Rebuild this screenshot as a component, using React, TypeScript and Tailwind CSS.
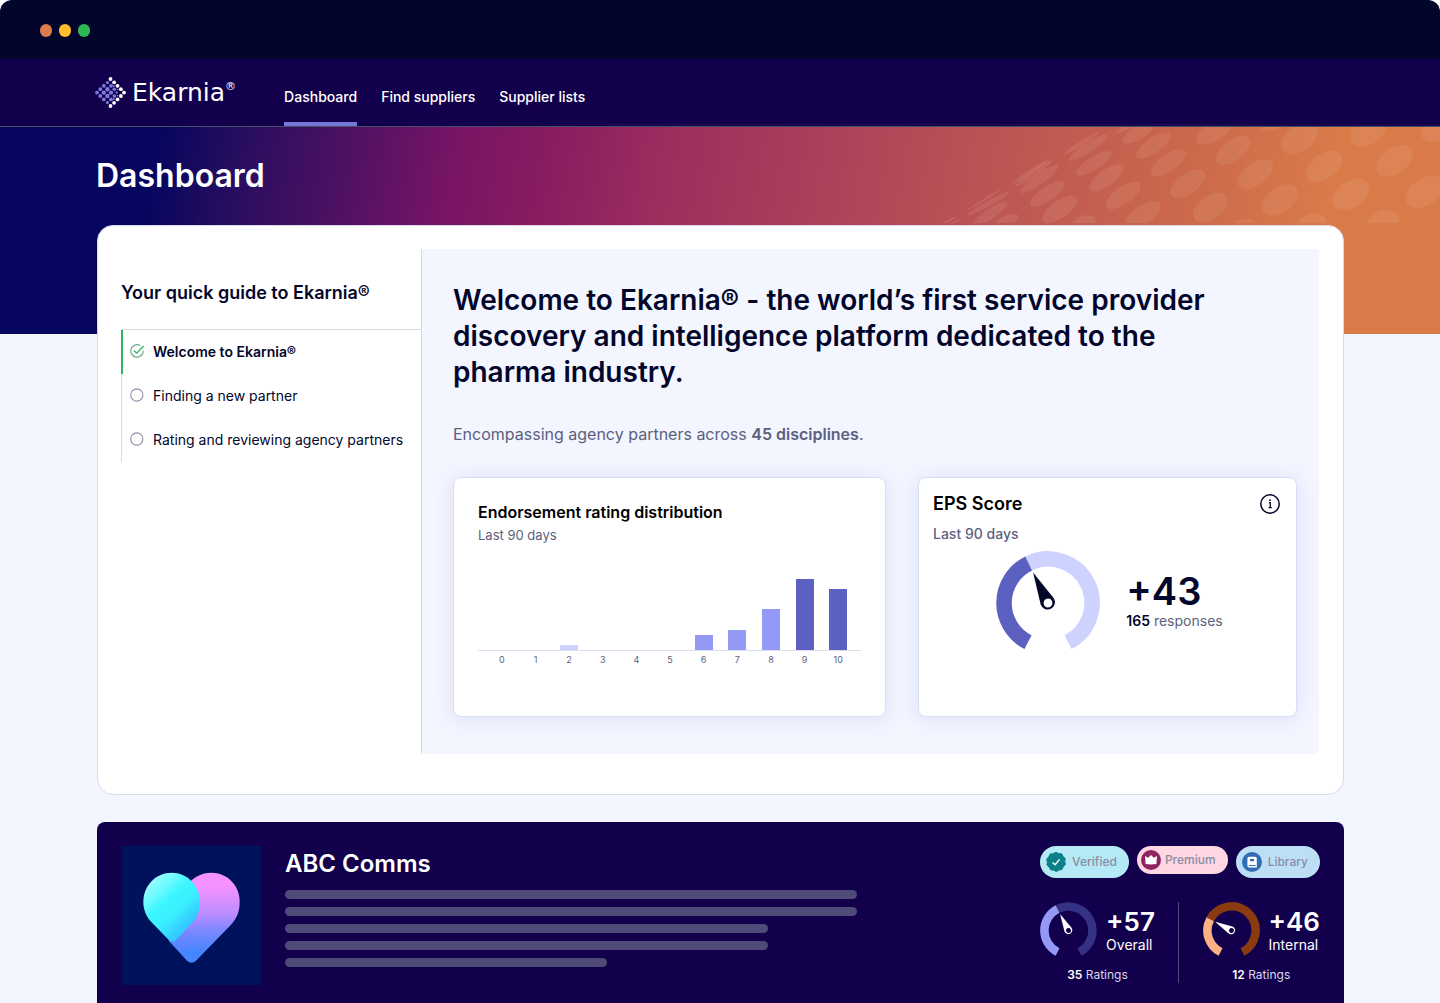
import React from "react";

type BarDatum = { label: string; height: number; tone: string };

const bars: BarDatum[] = [
  { label: "0", height: 0, tone: "bg-transparent" },
  { label: "1", height: 0, tone: "bg-transparent" },
  { label: "2", height: 5, tone: "bg-[#cdd2ff]" },
  { label: "3", height: 0, tone: "bg-transparent" },
  { label: "4", height: 0, tone: "bg-transparent" },
  { label: "5", height: 0, tone: "bg-transparent" },
  { label: "6", height: 15, tone: "bg-[#9599f6]" },
  { label: "7", height: 20, tone: "bg-[#9599f6]" },
  { label: "8", height: 41, tone: "bg-[#9599f6]" },
  { label: "9", height: 71, tone: "bg-[#5c60c1]" },
  { label: "10", height: 61, tone: "bg-[#5c60c1]" },
];

// cx, cy, rx, ry, rotation
const heroDots: number[][] = [
  [912, 64, 58, 28, -33], [967, 121, 58, 30, -38], [692, 68, 52, 20, -32], [735, 107, 60, 22, -36],
  [780, 158, 60, 26, -36], [836, 221, 60, 30, -37], [901, 292, 58, 34, -38], [1032, 192, 60, 33, -37],
  [1103, 270, 60, 37, -38], [1160, 85, 60, 38, -38], [1231, 169, 60, 37, -38], [1309, 254, 60, 39, -36],
  [1360, 64, 57, 39, -36], [1436, 152, 60, 38, -36], [1524, 245, 62, 40, -36], [1556, 56, 48, 36, -35],
  [1402, 340, 50, 38, -25], [1192, 348, 48, 34, -28], [1085, 40, 42, 20, -20], [995, 350, 36, 22, -20],
  [705, 315, 60, 28, -36], [648, 256, 60, 26, -37], [600, 203, 60, 24, -37], [562, 160, 60, 19, -34],
  [546, 113, 68, 14, -34], [526, 100, 62, 7, -33], [655, 54, 34, 6, -25], [532, 340, 38, 22, -22],
  [464, 298, 60, 26, -36], [427, 252, 60, 21, -35], [405, 207, 68, 15, -37], [388, 190, 64, 10, -36],
  [378, 184, 62, 5, -34], [262, 312, 60, 16, -35], [258, 280, 70, 8, -30], [243, 270, 60, 4, -33],
  [310, 332, 36, 16, -25], [142, 332, 24, 4, -30], [162, 335, 18, 3, -25],
];

function polar(deg: number, r: number): string {
  const a = (deg * Math.PI) / 180;
  return `${(52 + r * Math.sin(a)).toFixed(2)} ${(52 - r * Math.cos(a)).toFixed(2)}`;
}

function arc(from: number, to: number): string {
  return `M${polar(from, 44)} A44 44 0 ${to - from > 180 ? 1 : 0} 1 ${polar(to, 44)}`;
}

function Gauge(props: { angle: number; on: string; off: string; needle: string; hub: string; className: string }) {
  const { angle, on, off, needle, hub, className } = props;
  return (
    <svg viewBox="0 0 104 104" className={className} fill="none" aria-hidden="true">
      <path d={arc(angle, 153)} stroke={off} strokeWidth="15.5" />
      <path d={arc(-153, angle)} stroke={on} strokeWidth="15.5" />
      <g transform={`rotate(${angle} 52 52)`}>
        <path d="M52 18 L59.2 50 A7.3 7.3 0 1 1 44.8 50 Z" fill={needle} />
        <circle cx="52" cy="52" r="4.4" fill={hub} />
      </g>
    </svg>
  );
}

function LogoMark() {
  const rim = [
    [15.5, 2], [19.1, 5.4], [22.5, 8.8], [25.9, 12.2], [29, 15.6], [25.9, 19], [22.5, 22.4], [19.1, 25.8], [15.5, 29],
  ];
  const inner = [
    [2, 15.6, 1.9], [5.3, 12.2, 1.9], [5.3, 19, 1.9], [8.8, 8.8, 1.9], [8.8, 15.6, 2.2], [8.8, 22.4, 1.9],
    [12.4, 5.6, 1.5], [12.4, 12.2, 2.2], [12.4, 19, 2.2], [12.4, 25.6, 1.5],
    [16, 8.8, 1.9], [16, 15.6, 2.2], [16, 22.4, 1.9], [19.3, 12.2, 1.8], [19.3, 19, 1.8],
    [18.8, 9.2, 0.9], [18.8, 22, 0.9], [21.6, 15.6, 1.2], [22.6, 12.6, 0.8], [22.6, 18.6, 0.8],
  ];
  return (
    <svg viewBox="0 0 31 31" className="size-[31px]" aria-hidden="true">
      {inner.map(([x, y, r]) => (
        <circle key={`${x}-${y}`} cx={x} cy={y} r={r} fill="#7b7bdc" />
      ))}
      {rim.map(([x, y]) => (
        <circle key={`${x}-${y}`} cx={x} cy={y} r="1.9" fill="#fff" />
      ))}
    </svg>
  );
}

function HeartLogo() {
  return (
    <svg viewBox="96 198 417 417" className="size-[139px] shrink-0 bg-[#00125b]" role="img" aria-label="ABC Comms logo">
      <defs>
        <linearGradient id="pink" x1="0" y1="0" x2="0" y2="1">
          <stop offset="0.15" stopColor="#f592ff" />
          <stop offset="0.45" stopColor="#bd8dff" />
          <stop offset="0.65" stopColor="#7b88ff" />
          <stop offset="0.88" stopColor="#4784ff" />
        </linearGradient>
        <linearGradient id="cyan" gradientUnits="userSpaceOnUse" x1="170" y1="300" x2="290" y2="430">
          <stop offset="0" stopColor="#a5fbff" />
          <stop offset="0.25" stopColor="#74fbff" />
          <stop offset="0.5" stopColor="#3af6ff" />
          <stop offset="0.72" stopColor="#3af0ff" />
          <stop offset="1" stopColor="#33ccff" />
        </linearGradient>
      </defs>
      <path d="M290 318 C308 292 334 278 364 278 C412 278 449 316 449 365 C449 395 440 415 423 434 L318 542 Q304 554 291 542 L236 482 Z" fill="url(#pink)" />
      <path d="M245 278 C292 278 329 316 329 365 C329 395 321 412 308 427 L258 480 Q247 489 237 481 L186 428 C169 410 160 391 160 365 C160 316 198 278 245 278 Z" fill="url(#cyan)" />
    </svg>
  );
}

function NavLink(props: { label: string; active?: boolean }) {
  return (
    <a
      href="#"
      className={
        props.active
          ? "flex items-center border-b-4 border-[#7577d6] pt-[13px]"
          : "flex items-center border-b-4 border-transparent pt-[13px]"
      }
      aria-current={props.active ? "page" : undefined}
    >
      {props.label}
    </a>
  );
}

function GuideItem(props: { label: React.ReactNode; active?: boolean }) {
  return (
    <li className={props.active ? "border-l-2 border-[#30b35c]" : "border-l border-[#d8d9e6]"}>
      <button
        type="button"
        className={
          props.active
            ? "flex h-11 w-full items-center gap-2 pl-[6px] text-left font-semibold"
            : "flex h-11 w-full items-center gap-2 pl-[7px] text-left"
        }
      >
        <svg viewBox="0 0 16 16" className="size-4 shrink-0" fill="none" aria-hidden="true">
          {props.active ? (
            <>
              <path d="M14.2 6.6 A6.2 6.2 0 1 1 11.2 1.6" stroke="#6fa98c" strokeWidth="1.2" />
              <path d="M4.8 6.6 L7.8 9.2 L14.6 2" stroke="#30b35c" strokeWidth="1.3" />
            </>
          ) : (
            <circle cx="7.8" cy="7" r="6.1" stroke="#8f90ad" strokeWidth="1.1" />
          )}
        </svg>
        <span>{props.label}</span>
      </button>
    </li>
  );
}

function ScoreBlock(props: {
  value: string;
  label: string;
  count: string;
  angle: number;
  on: string;
  off: string;
}) {
  return (
    <div className="flex flex-col items-center gap-2">
      <div className="flex items-center gap-[9px]">
        <Gauge angle={props.angle} on={props.on} off={props.off} needle="#ffffff" hub="#13004d" className="size-[57px]" />
        <div className="flex flex-col pt-[3px]">
          <span className="text-[26px] leading-[26px] font-semibold">{props.value}</span>
          <span className="text-sm leading-5">{props.label}</span>
        </div>
      </div>
      <p className="text-xs leading-4 text-[#d9d6ea]">
        <strong className="font-semibold text-white">{props.count}</strong> Ratings
      </p>
    </div>
  );
}

export default function App() {
  return (
    <div className="flex min-h-screen flex-col overflow-hidden rounded-t-xl bg-[#f3f5ff] font-['Inter',sans-serif] text-[#03062b]">
      <div className="flex h-[59px] items-center gap-[7px] bg-[#03062b] px-10 pt-[2px]">
        <span className="h-[13px] w-3 rounded-full bg-[#dc7b4b]" />
        <span className="h-[13px] w-3 rounded-full bg-[#ffbd2e]" />
        <span className="h-[13px] w-3 rounded-full bg-[#30b755]" />
      </div>

      <header className="border-b border-[#46506a] bg-[#13004d] pr-24 pl-[95px] text-white">
        <div className="mx-auto flex h-[67px] max-w-[1249px] gap-12">
          <a href="#" className="flex items-center gap-[6px]" aria-label="Ekarnia home">
            <LogoMark />
            <span className="flex items-start font-['DejaVu_Sans',sans-serif] text-[25px] leading-7">
              Ekarnia<sup className="top-0 text-[11px] leading-4">®</sup>
            </span>
          </a>
          <nav className="flex gap-6 text-sm font-medium">
            <NavLink label="Dashboard" active />
            <NavLink label="Find suppliers" />
            <NavLink label="Supplier lists" />
          </nav>
        </div>
      </header>

      <section className="relative bg-[linear-gradient(100deg,#07065e_11%,#250d5f_16%,#4f1162_24%,#781465_31%,#861b60_37%,#9a2d5e_45%,#aa405a_56%,#b95255_66%,#cc6a4b_82%,#d97b49_91%)] px-24 pt-[29px] pb-[138px] text-white">
        <svg
          viewBox="0 51 1568 288"
          preserveAspectRatio="none"
          className="absolute top-0 right-0 h-24 w-[540px]"
          aria-hidden="true"
        >
          <g fill="#eebfa8" fillOpacity="0.13">
            {heroDots.map(([cx, cy, rx, ry, rot]) => (
              <ellipse key={`${cx}-${cy}`} cx={cx} cy={cy} rx={rx} ry={ry} transform={`rotate(${rot} ${cx} ${cy})`} />
            ))}
          </g>
        </svg>
        <div className="mx-auto max-w-[1248px]">
          <h1 className="text-[32px] leading-10 font-semibold">Dashboard</h1>
        </div>
      </section>

      <main className="relative -mt-[109px] flex flex-1 flex-col pr-24 pl-[97px]">
        <div className="mx-auto flex w-full max-w-[1247px] flex-1 flex-col gap-[27px]">
          <section className="flex rounded-2xl border border-[#d9daea] bg-white pt-[23px] pr-6 pb-10">
            <aside className="w-[323px] shrink-0 pl-[23px]">
              <h2 className="pt-8 pb-6 text-[18px] leading-6 font-semibold">Your quick guide to Ekarnia®</h2>
              <ul className="border-t border-[#d8d9e6] text-sm">
                <GuideItem active label="Welcome to Ekarnia®" />
                <GuideItem label="Finding a new partner" />
                <GuideItem label="Rating and reviewing agency partners" />
              </ul>
            </aside>

            <div className="flex-1 rounded-r-sm border-l border-[#d8d9e6] bg-[#f3f5ff] pt-[33px] pr-[22px] pb-[37px] pl-[31px]">
              <h2 className="max-w-[780px] text-[28px] leading-9 font-semibold">
                Welcome to Ekarnia® - the world’s first service provider discovery and intelligence platform dedicated
                to the pharma industry.
              </h2>
              <p className="mt-8 text-base text-[#5c5f80]">
                Encompassing agency partners across <strong className="font-semibold">45 disciplines</strong>.
              </p>

              <div className="mt-[31px] grid grid-cols-[433fr_379fr] gap-8">
                <section className="rounded-lg border border-[#dcdcfa] bg-white px-6 pt-6 pb-[50px] shadow-[0_2px_20px_rgba(92,96,193,0.14)]">
                  <h3 className="text-base leading-5 font-semibold text-black">Endorsement rating distribution</h3>
                  <p className="mt-[3px] text-[13px] leading-5 text-[#5c5f80]">Last 90 days</p>
                  <div className="flex h-[106px] items-end border-b border-[#dcdff0] pr-[6px] pl-[7px]">
                    {bars.map((b) => (
                      <div key={b.label} className="flex flex-1 justify-center">
                        <div className={`w-[18px] ${b.tone}`} style={{ height: b.height }} />
                      </div>
                    ))}
                  </div>
                  <div className="flex pt-[3px] pr-[6px] pl-[7px] text-[9px] leading-3 text-[#5c5f80]">
                    {bars.map((b) => (
                      <span key={b.label} className="flex-1 text-center">
                        {b.label}
                      </span>
                    ))}
                  </div>
                </section>

                <section className="rounded-lg border border-[#dcdcfa] bg-white p-[14px] shadow-[0_2px_20px_rgba(92,96,193,0.14)]">
                  <div className="flex items-center justify-between">
                    <h3 className="text-lg leading-6 font-semibold text-black">EPS Score</h3>
                    <button type="button" aria-label="About the EPS score" className="size-6">
                      <svg viewBox="0 0 24 24" className="size-6" fill="none" stroke="#03062b" aria-hidden="true">
                        <circle cx="12" cy="12" r="9.2" strokeWidth="1.5" />
                        <path d="M10.8 10.6 H12.3 V15.6 M10.6 15.6 H13.8" strokeWidth="1.3" />
                        <circle cx="12" cy="8.2" r="0.9" fill="#03062b" stroke="none" />
                      </svg>
                    </button>
                  </div>
                  <p className="mt-2 text-sm leading-5 font-medium text-[#5c5f80]">Last 90 days</p>
                  <div className="mt-[7px] flex items-center justify-center gap-[26px] pl-1">
                    <Gauge angle={-26} on="#5c60c1" off="#cdd2ff" needle="#03062b" hub="#ffffff" className="size-[104px]" />
                    <div className="pb-1">
                      <p className="text-[38px] leading-10 font-semibold">+43</p>
                      <p className="text-sm leading-5 text-[#5c5f80]">
                        <strong className="font-semibold text-[#03062b]">165</strong> responses
                      </p>
                    </div>
                  </div>
                </section>
              </div>
            </div>
          </section>

          <section className="flex flex-1 gap-6 rounded-t-lg bg-[#13004d] pt-6 pr-6 pb-[18px] pl-[25px] text-white">
            <HeartLogo />
            <div className="flex-1">
              <h2 className="pt-1 text-2xl leading-7 font-semibold">ABC Comms</h2>
              <div className="mt-3 flex max-w-[572px] flex-col gap-2">
                <span className="h-[9px] w-full rounded-full bg-[#4f4b78]" />
                <span className="h-[9px] w-full rounded-full bg-[#4f4b78]" />
                <span className="h-[9px] w-[483px] max-w-full rounded-full bg-[#4f4b78]" />
                <span className="h-[9px] w-[483px] max-w-full rounded-full bg-[#4f4b78]" />
                <span className="h-[9px] w-[322px] max-w-full rounded-full bg-[#4f4b78]" />
              </div>
            </div>
            <div className="flex flex-col gap-6">
              <div className="flex items-start gap-2 text-xs font-medium text-[#8a8ca5]">
                <span className="flex h-8 items-center gap-[6px] rounded-full bg-[#b5e9f5] pr-3 pl-[6px]">
                  <svg viewBox="0 0 20 20" className="size-5" aria-hidden="true">
                    <path d="M10 0.3 L12.7 1.6 L15.7 1.8 L17 4.5 L19.2 6.5 L18.8 9.6 L19.4 12.6 L17.2 14.7 L16 17.5 L13 18 L10.4 19.6 L7.7 18.2 L4.6 17.8 L3.2 15 L0.9 13 L1.4 10 L0.6 7 L2.8 4.9 L4 2.1 L7 1.7 Z" fill="#0b8187" stroke="#0b8187" strokeLinejoin="round" />
                    <path d="M6.6 10.4 L9.1 12.7 L13.6 7.4" fill="none" stroke="#fff" strokeWidth="1.4" />
                  </svg>
                  Verified
                </span>
                <span className="flex h-7 items-center gap-1 rounded-full bg-[#ffd7e2] pr-3 pl-1">
                  <svg viewBox="0 0 20 20" className="size-5" aria-hidden="true">
                    <circle cx="10" cy="10" r="10" fill="#8f2461" />
                    <path d="M4 6 L7.2 7.8 L10 5 L12.8 7.8 L16 6 L15.4 14 Q10 14.8 4.6 14 Z" fill="#fff" />
                  </svg>
                  Premium
                </span>
                <span className="flex h-8 items-center gap-[6px] rounded-full bg-[#bddff5] pr-3 pl-[6px]">
                  <svg viewBox="0 0 20 20" className="size-5" aria-hidden="true">
                    <circle cx="10" cy="10" r="10" fill="#2f6db5" />
                    <path d="M7 4.8 H13.2 Q14.8 4.8 14.8 6.4 V15.4 H7 Q5.4 15.4 5.4 13.8 V6.4 Q5.4 4.8 7 4.8 Z" fill="#fff" />
                    <path d="M8 7 H12.2 V9.2 H8 Z" fill="#2f6db5" />
                    <path d="M7 13.5 H13.6" stroke="#2f6db5" strokeWidth="1" />
                  </svg>
                  Library
                </span>
              </div>
              <div className="flex justify-between">
                <ScoreBlock value="+57" label="Overall" count="35" angle={-27} on="#9599f6" off="#353184" />
                <div className="w-px bg-[#4f4b78]" />
                <ScoreBlock value="+46" label="Internal" count="12" angle={-62} on="#fbb184" off="#8a3c10" />
              </div>
            </div>
          </section>
        </div>
      </main>
    </div>
  );
}
